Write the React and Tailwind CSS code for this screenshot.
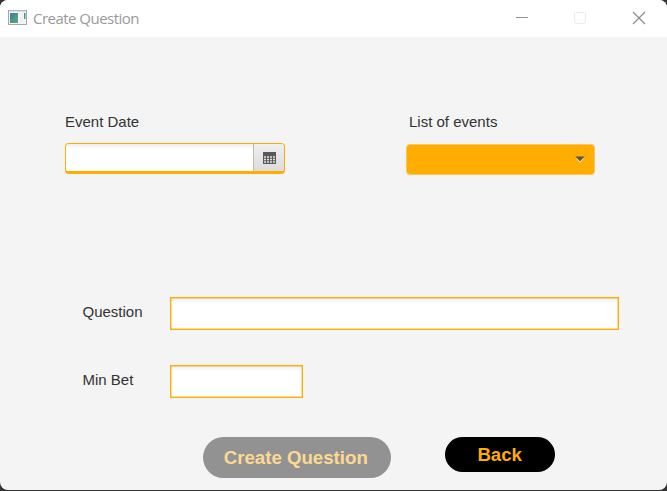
import React from 'react';

function AppIcon() {
  return (
    <svg width="19" height="15" viewBox="0 0 19 15" className="mt-[10px] shrink-0">
      <defs>
        <linearGradient id="pane" x1="0" y1="0" x2="1" y2="1">
          <stop offset="0" stopColor="#4577a3" />
          <stop offset="1" stopColor="#55b075" />
        </linearGradient>
      </defs>
      <rect x="0.5" y="0.5" width="18" height="14" fill="#f3f5f8" stroke="#a3a8ad" />
      <path d="M1 1H18" stroke="#c3c9cf" />
      <rect x="2" y="3" width="8" height="10" fill="url(#pane)" />
      <rect x="11" y="3" width="4" height="10" fill="#f1f1f4" />
      <rect x="16" y="3" width="1.5" height="6" fill="url(#pane)" />
    </svg>
  );
}

function TitleBar() {
  return (
    <header className="flex h-[37px] shrink-0 bg-white pl-2">
      <AppIcon />
      <h1 className="ml-[6px] h-[37px] font-['Open_Sans',sans-serif] text-[15px] leading-[37px] tracking-[-0.52px] whitespace-nowrap text-[#999999]">Create Question</h1>
      <svg width="131" height="14" viewBox="0 0 131 14" className="mt-[11px] mr-[21px] ml-auto shrink-0" fill="none">
        <path d="M1 6.5H13" stroke="#929292" />
        <rect x="59.5" y="1.5" width="11" height="11" rx="1" stroke="#ebebeb" />
        <path d="M118 1L130 13M130 1L118 13" stroke="#8b8b8b" strokeWidth="1.2" />
      </svg>
    </header>
  );
}

function CalendarIcon() {
  return (
    <svg width="13" height="12" viewBox="0 0 13 12">
      <path d="M0 0H13V12H0Z" fill="#595959" />
      <path d="M1 5h2M4 5h2M7 5h2M10 5h2M1 7.5h2M4 7.5h2M7 7.5h2M10 7.5h2M1 10h2M4 10h2M7 10h2M10 10h2" stroke="#e2e2e2" strokeWidth="1.4" />
    </svg>
  );
}

function TextField({ className }) {
  return (
    <input
      type="text"
      className={`h-[33px] border border-[#ffad00] bg-white bg-linear-to-b from-[#ececec] to-white to-[5px] shadow-[inset_0_0_0_0.5px_#f5b640] outline-none ${className}`}
    />
  );
}

export default function App() {
  return (
    <div className="h-[491px] w-[667px] overflow-hidden bg-[#343434] font-['Liberation_Sans',Arial,sans-serif] text-[15px] text-[#333333]">
      <div className="flex h-[490px] flex-col overflow-hidden rounded-[8px] bg-[#f4f4f4]">
        <TitleBar />
        <main className="flex flex-col">
          <div className="flex pt-[76px] pl-[65px]">
            <section className="w-[341px]">
              <label className="block h-[18px] leading-[18px]">Event Date</label>
              <div className="mt-[12px] flex h-[31px] w-[220px] overflow-hidden rounded-[4px] border border-b-[3px] border-[#ffad00] bg-white shadow-[inset_0_0_0_0.5px_#f5b640]">
                <input type="text" className="min-w-0 flex-1 bg-linear-to-b from-[#eeeeee] to-white to-[5px] outline-none" />
                <button className="flex w-[31px] items-center justify-center border-l border-[#c2b9a6] bg-linear-to-b from-[#efefef] to-[#dcdcdc] pt-px pl-px">
                  <CalendarIcon />
                </button>
              </div>
            </section>
            <section>
              <label className="ml-[3px] block h-[18px] leading-[18px]">List of events</label>
              <button className="mt-[13px] flex h-[31px] w-[189px] items-center justify-end rounded-[4px] border border-[#fdc65a] bg-[#ffad00] pr-[9px]">
                <svg width="10" height="7" viewBox="0 0 10 7">
                  <path d="M1 2H9L5 7Z" fill="#ffe0a0" />
                  <path d="M0.3 0.5H9.7L5 5.3Z" fill="#565656" />
                </svg>
              </button>
            </section>
          </div>
          <div className="mt-[122px] flex items-start pl-[82.5px]">
            <label className="w-[87.5px] leading-[29px]">Question</label>
            <TextField className="w-[449.4px]" />
          </div>
          <div className="mt-[34.5px] flex items-start pl-[82.5px]">
            <label className="w-[87.5px] leading-[30px]">Min Bet</label>
            <TextField className="w-[133.4px]" />
          </div>
          <div className="mt-[39.5px] flex items-start pl-[202.5px] text-[18.67px] font-bold">
            <button disabled className="h-[41.4px] w-[188.5px] rounded-full bg-[#929292] pr-[2px] leading-[41px] text-[#fbd992]">Create Question</button>
            <button className="ml-[54px] h-[35.4px] w-[110.4px] rounded-full bg-black pr-px leading-[35px] text-[#ffad00]">Back</button>
          </div>
        </main>
      </div>
    </div>
  );
}
